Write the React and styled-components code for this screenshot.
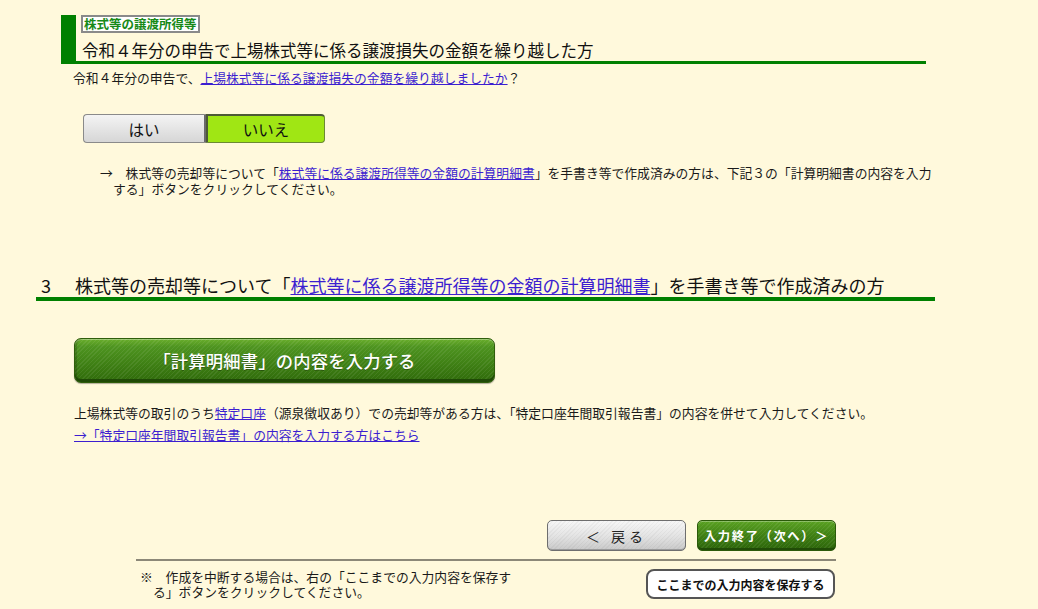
import React from "react";
import styled, { createGlobalStyle } from "styled-components";

const Global = createGlobalStyle`
  html, body { margin: 0; padding: 0; background: #fff9dc; }
  body {
    font-family: "Noto Sans CJK JP", "Noto Sans", sans-serif;
    color: #1a1a1a;
    width: 1038px;
    height: 609px;
    overflow: hidden;
  }
`;

const Page = styled.div`
  padding-top: 15px;
`;

const Section = styled.section`
  margin-left: 61px;
  width: 865px;
`;

const Header = styled.div`
  border-left: 15px solid #008000;
  border-bottom: 3px solid #008000;
  padding-left: 5px;
`;

const Label = styled.div`
  width: fit-content;
  height: 18px;
  line-height: 14px;
  box-sizing: border-box;
  padding: 0 1px;
  background: #fff;
  border: 2px solid #8a8a8a;
  color: #178a17;
  font-size: 12.5px;
  font-weight: 700;
`;

const Title = styled.h2`
  margin: 6px 0 0 1px;
  font-size: 16.5px;
  font-weight: 400;
  line-height: 22px;
  color: #111;
`;

const Text = styled.p`
  margin: ${(p) => p.$mt || 0}px 0 0 ${(p) => p.$ml || 0}px;
  font-size: 12.8px;
  line-height: 18px;
`;

const Link = styled.a`
  color: #3c1fd0;
  text-decoration: underline;
  cursor: pointer;
`;

const Toggle = styled.div`
  display: flex;
  margin: 27px 0 0 22px;
  width: 242px;
  height: 29px;
`;

const ToggleBtn = styled.button`
  flex: 0 0 ${(p) => p.$w}px;
  height: 29px;
  box-sizing: border-box;
  font-family: inherit;
  font-size: 15.5px;
  color: #111;
  padding: 0;
  cursor: pointer;
  border-radius: ${(p) => (p.$first ? "4px 0 0 4px" : "0 4px 4px 0")};
  ${(p) =>
    p.$active
      ? `
    background: #a0e614;
    border-top: 2px solid #4d5a36;
    border-left: 2px solid #4d5a36;
    border-right: 1px solid #6b8a33;
    border-bottom: 1px solid #6b8a33;
  `
      : `
    background: linear-gradient(#f4f4f4, #d6d6d6);
    border: 1px solid #8a8a8a;
    border-right: 2px solid #6a6a6a;
  `}
`;

const Hanging = styled.p`
  margin: 22px 0 0 39px;
  width: 822px;
  padding-left: 13px;
  text-indent: -13px;
  font-size: 12.8px;
  line-height: 16px;
`;

const Section3 = styled.section`
  margin: 76px 0 0 36px;
  width: 899px;
`;

const H3 = styled.h2`
  margin: 0;
  display: flex;
  font-size: 18px;
  font-weight: 400;
  line-height: 24px;
  border-bottom: 4px solid #008000;
  padding-left: 5px;
  color: #111;
`;

const Num = styled.span`
  flex: 0 0 34px;
`;

const Body3 = styled.div`
  padding-left: 38px;
`;

const BigButton = styled.button`
  display: block;
  margin-top: 37px;
  width: 421px;
  height: 45px;
  border-radius: 7px;
  border: 1px solid #2f5e0c;
  color: #fff;
  font-family: inherit;
  font-size: 17.3px;
  font-weight: 500;
  letter-spacing: 0.2px;
  cursor: pointer;
  background-image:
    repeating-linear-gradient(135deg, rgba(255,255,255,0.07) 0 1px, transparent 1px 3px),
    linear-gradient(#6aae2c 0%, #4e9420 18%, #3e7f14 60%, #2f6a0a 100%);
  box-shadow: inset 0 -3px 0 #1f4a06, inset 2px 0 0 rgba(0,0,0,0.15), inset 0 1px 0 rgba(255,255,255,0.35), 0 1px 1px rgba(0,0,0,0.3);
  text-shadow: 0 1px 0 rgba(0,0,0,0.3);
`;

const Footer = styled.div`
  margin: 76px 0 0 136px;
  width: 700px;
`;

const NavRow = styled.div`
  display: flex;
  justify-content: flex-end;
  gap: 11px;
`;

const NavBtn = styled.button`
  width: 139px;
  height: 31px;
  border-radius: 5px;
  font-family: inherit;
  cursor: pointer;
  padding: 0;
  ${(p) =>
    p.$primary
      ? `
    border: 1px solid #2b5a0a;
    color: #fff;
    font-size: 12.3px;
    font-weight: 700;
    letter-spacing: 1.6px;
    background-image:
      repeating-linear-gradient(135deg, rgba(255,255,255,0.07) 0 1px, transparent 1px 3px),
      linear-gradient(#5aa222, #3c7c12 55%, #2c640a);
    box-shadow: inset 0 -2px 0 #214c07, inset 0 1px 0 rgba(255,255,255,0.3);
  `
      : `
    border: 1px solid #6e6e6e;
    color: #222;
    font-size: 14px;
    letter-spacing: 4px;
    background-image:
      repeating-linear-gradient(135deg, rgba(0,0,0,0.035) 0 1px, transparent 1px 3px),
      linear-gradient(#f7f7f7, #e2e2e2 55%, #c9c9c9);
    box-shadow: inset 0 -1px 0 #9a9a9a;
  `}
`;

const Rule = styled.hr`
  margin: 8px 0 0;
  border: 0;
  height: 2px;
  background: #8c8878;
`;

const NoteRow = styled.div`
  display: flex;
  justify-content: space-between;
  align-items: flex-start;
  padding: 7px 1px 0 4px;
`;

const Note = styled.p`
  margin: 1px 0 0;
  width: 360px;
  padding-left: 13px;
  text-indent: -13px;
  font-size: 12.8px;
  line-height: 15px;
`;

const SaveBtn = styled.button`
  width: 189px;
  height: 30px;
  margin-top: 1px;
  background: #fff;
  border: 2px solid #555;
  border-radius: 8px;
  font-family: inherit;
  font-size: 12px;
  font-weight: 700;
  color: #111;
  padding: 0;
  cursor: pointer;
`;

export default function App() {
  return (
    <Page>
      <Global />
      <Section>
        <Header>
          <Label>株式等の譲渡所得等</Label>
          <Title>令和４年分の申告で上場株式等に係る譲渡損失の金額を繰り越した方</Title>
        </Header>
        <Text $mt={5} $ml={12}>
          令和４年分の申告で、<Link>上場株式等に係る譲渡損失の金額を繰り越しましたか</Link>？
        </Text>
        <Toggle>
          <ToggleBtn $w={123} $first>はい</ToggleBtn>
          <ToggleBtn $w={119} $active>いいえ</ToggleBtn>
        </Toggle>
        <Hanging>
          →　株式等の売却等について「<Link>株式等に係る譲渡所得等の金額の計算明細書</Link>」を手書き等で作成済みの方は、下記３の「計算明細書の内容を入力する」ボタンをクリックしてください。
        </Hanging>
      </Section>

      <Section3>
        <H3>
          <Num>3</Num>
          <span>
            株式等の売却等について「<Link>株式等に係る譲渡所得等の金額の計算明細書</Link>」を手書き等で作成済みの方
          </span>
        </H3>
        <Body3>
          <BigButton>「計算明細書」の内容を入力する</BigButton>
          <Text $mt={21}>
            上場株式等の取引のうち<Link>特定口座</Link>（源泉徴収あり）での売却等がある方は、「特定口座年間取引報告書」の内容を併せて入力してください。
          </Text>
          <Text $mt={4}>
            <Link>→「特定口座年間取引報告書」の内容を入力する方はこちら</Link>
          </Text>
        </Body3>
      </Section3>

      <Footer>
        <NavRow>
          <NavBtn>＜ 戻る</NavBtn>
          <NavBtn $primary>入力終了（次へ）＞</NavBtn>
        </NavRow>
        <Rule />
        <NoteRow>
          <Note>※　作成を中断する場合は、右の「ここまでの入力内容を保存する」ボタンをクリックしてください。</Note>
          <SaveBtn>ここまでの入力内容を保存する</SaveBtn>
        </NoteRow>
      </Footer>
    </Page>
  );
}
